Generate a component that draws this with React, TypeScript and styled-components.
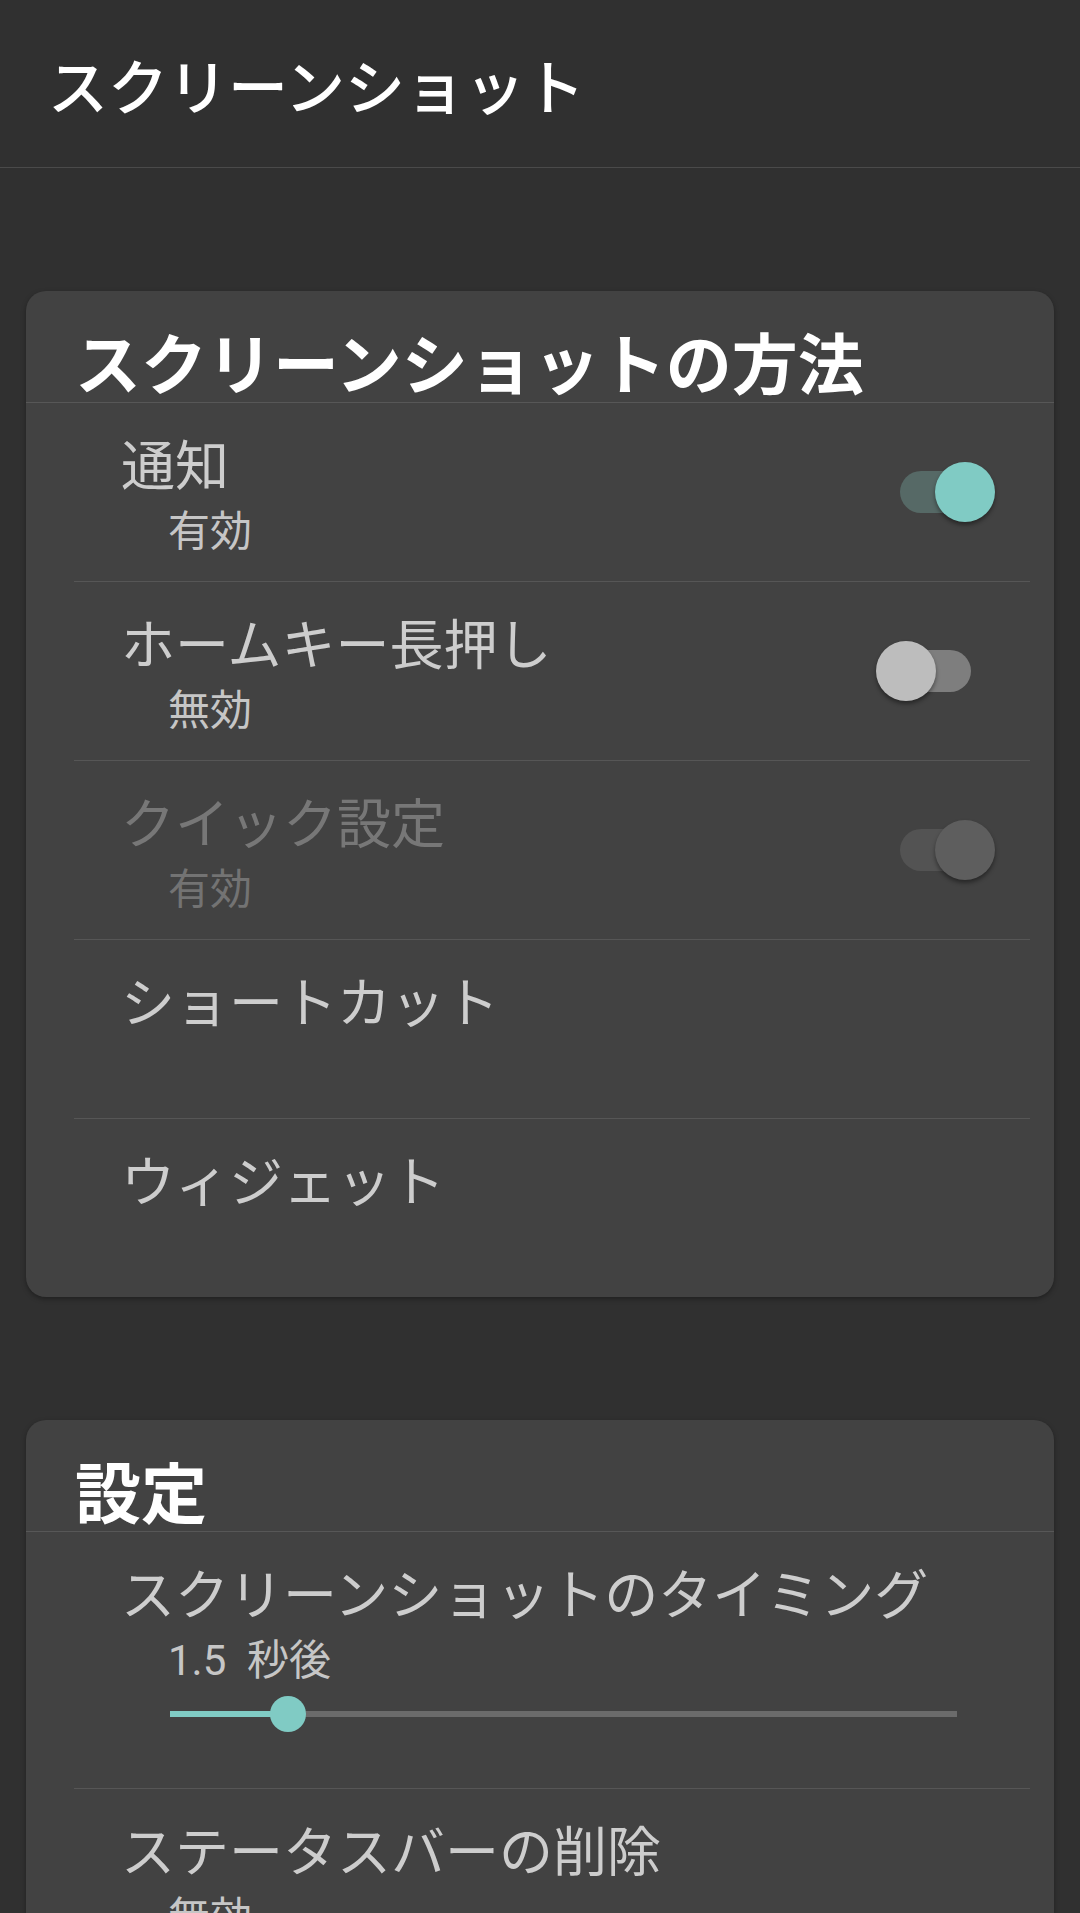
import React from "react";
import styled, { createGlobalStyle } from "styled-components";

const GlobalStyle = createGlobalStyle`
  html, body {
    margin: 0;
    padding: 0;
    overflow: hidden;
    background: #303030;
  }
  body {
    font-family: "Noto Sans CJK JP", "Noto Sans", sans-serif;
    -webkit-font-smoothing: antialiased;
  }
`;

const Page = styled.div`
  width: 1080px;
  min-height: 1913px;
  background: #303030;
  display: flex;
  flex-direction: column;
`;

const AppBar = styled.header`
  height: 168px;
  border-bottom: 1px solid #4a4a4a;
  display: flex;
  align-items: center;
  padding-left: 48px;
  box-sizing: border-box;
  flex-shrink: 0;
`;

const AppTitle = styled.h1`
  margin: 0;
  color: #ffffff;
  font-size: 60px;
  font-weight: 500;
  line-height: 72px;
  letter-spacing: 0;
`;

const Content = styled.main`
  display: flex;
  flex-direction: column;
  gap: 123px;
  padding: 123px 26px 0 26px;
`;

const Card = styled.section`
  background: #424242;
  border-radius: 20px;
  box-shadow: 0 2px 5px rgba(0, 0, 0, 0.35);
  display: flex;
  flex-direction: column;
  overflow: hidden;
`;

const CardHeader = styled.div`
  height: 112px;
  box-sizing: border-box;
  border-bottom: 1px solid #575757;
  padding: 26px 0 0 49px;
`;

const CardTitle = styled.h2`
  margin: 0;
  color: #ffffff;
  font-size: 66px;
  font-weight: 700;
  line-height: 86px;
`;

const Row = styled.div<{ $last?: boolean; $height?: number }>`
  margin: 0 24px 0 48px;
  height: ${(p) => p.$height ?? 178}px;
  border-bottom: ${(p) => (p.$last ? "none" : "1px solid #565656")};
  display: flex;
  align-items: flex-start;
  justify-content: space-between;
`;

const RowText = styled.div`
  display: flex;
  flex-direction: column;
  padding: 28px 0 0 47px;
  flex: 1;
`;

const RowTitle = styled.div<{ $disabled?: boolean }>`
  font-size: 54px;
  line-height: 64px;
  color: ${(p) => (p.$disabled ? "#777777" : "#cdcdcd")};
`;

const RowSub = styled.div<{ $disabled?: boolean }>`
  font-family: Roboto, "Noto Sans CJK JP", sans-serif;
  font-size: 42px;
  line-height: 50px;
  margin: 12px 0 0 47px;
  color: ${(p) => (p.$disabled ? "#737373" : "#c6c6c6")};
  white-space: pre;
`;

const SwitchBox = styled.div`
  position: relative;
  align-self: center;
  width: 119px;
  height: 64px;
  margin-right: 35px;
  flex-shrink: 0;
`;

const Track = styled.div<{ $color: string }>`
  position: absolute;
  left: 24px;
  top: 11px;
  width: 71px;
  height: 42px;
  border-radius: 21px;
  background: ${(p) => p.$color};
`;

const Thumb = styled.div<{ $on: boolean; $color: string }>`
  position: absolute;
  top: 2px;
  left: ${(p) => (p.$on ? 59 : 0)}px;
  width: 60px;
  height: 60px;
  border-radius: 50%;
  background: ${(p) => p.$color};
  box-shadow: 0 3px 4px rgba(0, 0, 0, 0.4);
`;

type SwitchState = "on" | "off" | "disabled";

const switchColors: Record<SwitchState, { track: string; thumb: string }> = {
  on: { track: "#566966", thumb: "#80cbc4" },
  off: { track: "#7e7e7e", thumb: "#bdbdbd" },
  disabled: { track: "#535353", thumb: "#5e5e5e" },
};

const Switch: React.FC<{ state: SwitchState }> = ({ state }) => {
  const c = switchColors[state];
  return (
    <SwitchBox>
      <Track $color={c.track} />
      <Thumb $on={state !== "off"} $color={c.thumb} />
    </SwitchBox>
  );
};

const SliderBox = styled.div`
  position: relative;
  margin: 10px 0 0 49px;
  width: 787px;
  height: 36px;
`;

const SliderRail = styled.div`
  position: absolute;
  left: 0;
  right: 0;
  top: 15px;
  height: 6px;
  background: #6b6b6b;
`;

const SliderFill = styled.div`
  position: absolute;
  left: 0;
  top: 15px;
  height: 6px;
  background: #80cbc4;
`;

const SliderThumb = styled.div`
  position: absolute;
  top: 0;
  width: 36px;
  height: 36px;
  margin-left: -18px;
  border-radius: 50%;
  background: #80cbc4;
`;

const Slider: React.FC<{ value: number }> = ({ value }) => (
  <SliderBox>
    <SliderRail />
    <SliderFill style={{ width: `${value}%` }} />
    <SliderThumb style={{ left: `${value}%` }} />
  </SliderBox>
);

const methods: { title: string; sub?: string; state?: SwitchState }[] = [
  { title: "通知", sub: "有効", state: "on" },
  { title: "ホームキー長押し", sub: "無効", state: "off" },
  { title: "クイック設定", sub: "有効", state: "disabled" },
  { title: "ショートカット" },
  { title: "ウィジェット" },
];

export default function App() {
  return (
    <>
      <GlobalStyle />
      <Page>
        <AppBar>
          <AppTitle>スクリーンショット</AppTitle>
        </AppBar>
        <Content>
          <Card>
            <CardHeader>
              <CardTitle>スクリーンショットの方法</CardTitle>
            </CardHeader>
            {methods.map((m, i) => (
              <Row key={m.title} $last={i === methods.length - 1}>
                <RowText>
                  <RowTitle $disabled={m.state === "disabled"}>{m.title}</RowTitle>
                  {m.sub && <RowSub $disabled={m.state === "disabled"}>{m.sub}</RowSub>}
                </RowText>
                {m.state && <Switch state={m.state} />}
              </Row>
            ))}
          </Card>
          <Card>
            <CardHeader>
              <CardTitle>設定</CardTitle>
            </CardHeader>
            <Row $height={256}>
              <RowText>
                <RowTitle>スクリーンショットのタイミング</RowTitle>
                <RowSub>{"1.5  秒後"}</RowSub>
                <Slider value={15} />
              </RowText>
            </Row>
            <Row $last>
              <RowText>
                <RowTitle>ステータスバーの削除</RowTitle>
                <RowSub>無効</RowSub>
              </RowText>
            </Row>
          </Card>
        </Content>
      </Page>
    </>
  );
}
